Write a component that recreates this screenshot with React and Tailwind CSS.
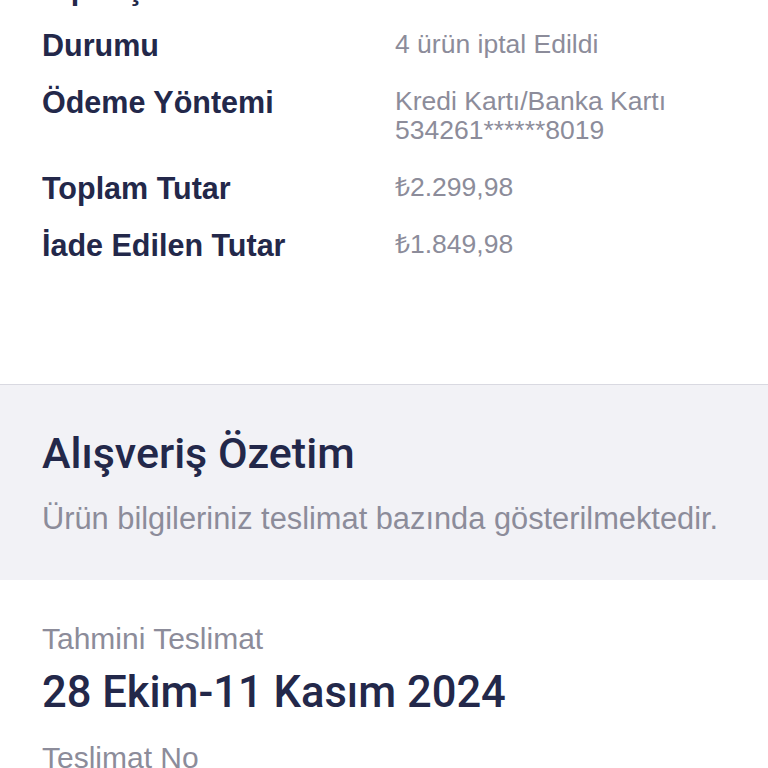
const ROWS = [
  { label: 'Sipariş Tarihi', value: ['24 Ekim 2024'] },
  { label: 'Durumu', value: ['4 ürün iptal Edildi'] },
  { label: 'Ödeme Yöntemi', value: ['Kredi Kartı/Banka Kartı', '534261******8019'] },
  { label: 'Toplam Tutar', value: ['₺2.299,98'] },
  { label: 'İade Edilen Tutar', value: ['₺1.849,98'] },
];

export default function App() {
  return (
    <div className="min-h-screen bg-white font-['Liberation_Sans',Arial,sans-serif] overflow-hidden">
      {/* Order details */}
      <div className="pl-[42px] pb-[125px] border-b border-[#d9d9e1]">
        <div className="-mt-[26px] flex flex-col gap-[29px]">
          {ROWS.map(r => (
            <div key={r.label} className="flex items-start">
              <div className="w-[353px] shrink-0 text-[30.5px] leading-[28px] font-bold text-[#23284a]">{r.label}</div>
              <div className="-mt-[1px] text-[26.5px] leading-[29px] text-[#8c8c9a]">
                {r.value.map(v => (
                  <div key={v}>{v}</div>
                ))}
              </div>
            </div>
          ))}
        </div>
      </div>

      {/* Summary header */}
      <div className="bg-[#f2f2f6] px-[42px] pt-[46px] pb-[46px]">
        <h2 className="font-['Roboto',sans-serif] font-medium text-[43px] leading-[44px] text-[#23284a]">Alışveriş Özetim</h2>
        <p className="mt-[29px] text-[30.8px] leading-[30px] text-[#8c8c9a]">Ürün bilgileriniz teslimat bazında gösterilmektedir.</p>
      </div>

      {/* Delivery */}
      <div className="px-[42px] pt-[44px]">
        <div className="text-[30px] leading-[29px] text-[#8c8c9a]">Tahmini Teslimat</div>
        <div className="mt-[19px] font-['Roboto',sans-serif] font-medium text-[43.5px] leading-[42px] text-[#23284a]">28 Ekim-11 Kasım 2024</div>
        <div className="mt-[29px] text-[30px] leading-[29px] text-[#8c8c9a]">Teslimat No</div>
        <div className="mt-[14px] text-[36px] leading-[36px] font-bold text-[#23284a]">3457821906</div>
      </div>
    </div>
  );
}
